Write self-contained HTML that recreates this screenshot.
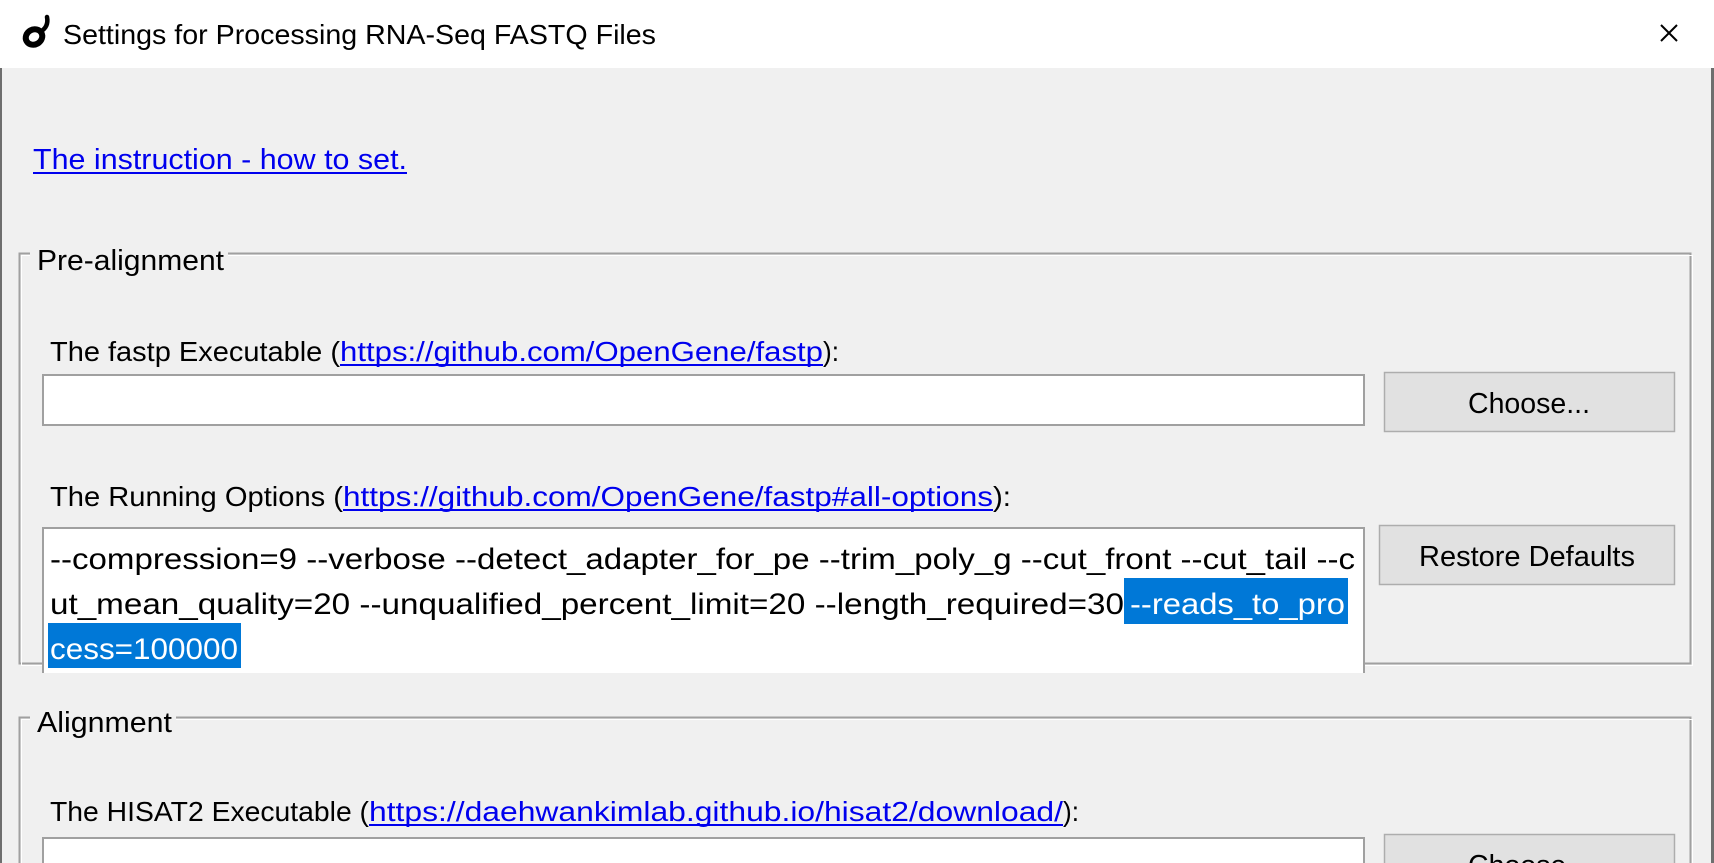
<!DOCTYPE html>
<html><head><meta charset="utf-8"><style>
html,body{margin:0;padding:0;width:1714px;height:863px;overflow:hidden;background:#f0f0f0}
svg{display:block}
text{font-family:"Liberation Sans","DejaVu Sans",sans-serif;fill:#000}
.l{fill:#0000ee}
</style></head><body>
<svg width="1714" height="863" viewBox="0 0 1714 863" xmlns="http://www.w3.org/2000/svg">
<defs><clipPath id="c"><rect x="0" y="0" width="1714" height="863"/></clipPath></defs>
<g clip-path="url(#c)">
<rect x="0" y="0" width="1714" height="863" fill="#f0f0f0"/>
<rect x="0" y="0" width="1714" height="68" fill="#ffffff"/>
<rect x="0" y="68" width="2" height="795" fill="#6e6e6e"/>
<rect x="1711" y="68" width="3" height="795" fill="#6e6e6e"/>
<!-- icon -->
<ellipse cx="34" cy="37" rx="8.5" ry="7.5" fill="none" stroke="#000" stroke-width="6" transform="rotate(-30 34 37)"/>
<path d="M40 32 Q49 27 47 17" fill="none" stroke="#000" stroke-width="4.5" stroke-linecap="round"/>
<text x="63" y="44" font-size="28" textLength="593" lengthAdjust="spacingAndGlyphs">Settings for Processing RNA-Seq FASTQ Files</text>
<path d="M1661 25 L1677 41 M1677 25 L1661 41" stroke="#000" stroke-width="2"/>
<!-- link -->
<text x="33" y="169" font-size="29" class="l" textLength="374" lengthAdjust="spacingAndGlyphs">The instruction - how to set.</text>
<rect x="33" y="172" width="374" height="2" fill="#0000ee"/>
<!-- group 1 -->
<rect x="19.5" y="253.5" width="1671" height="410" fill="none" stroke="#a0a0a0" stroke-width="2"/>
<rect x="21.5" y="255.5" width="1671" height="410" fill="none" stroke="#ffffff" stroke-width="1"/>
<rect x="30" y="240" width="198" height="30" fill="#f0f0f0"/>
<text x="37" y="270" font-size="29" textLength="187" lengthAdjust="spacingAndGlyphs">Pre-alignment</text>
<text x="50" y="361" font-size="28" textLength="290" lengthAdjust="spacingAndGlyphs">The fastp Executable (</text>
<text x="340" y="361" font-size="28" class="l" textLength="483" lengthAdjust="spacingAndGlyphs">https://github.com/OpenGene/fastp</text>
<rect x="340" y="364" width="483" height="2" fill="#0000ee"/>
<text x="823" y="361" font-size="28" textLength="16" lengthAdjust="spacingAndGlyphs">):</text>
<rect x="43" y="375" width="1321" height="50" fill="#fff" stroke="#a0a0a0" stroke-width="2"/>
<rect x="1384.5" y="372.5" width="290" height="59" fill="#e1e1e1" stroke="#adadad" stroke-width="1.5"/>
<text x="1529" y="413" font-size="29" text-anchor="middle" textLength="122" lengthAdjust="spacingAndGlyphs">Choose...</text>
<text x="50" y="506" font-size="28" textLength="293" lengthAdjust="spacingAndGlyphs">The Running Options (</text>
<text x="343" y="506" font-size="28" class="l" textLength="650" lengthAdjust="spacingAndGlyphs">https://github.com/OpenGene/fastp#all-options</text>
<rect x="343" y="509" width="650" height="2" fill="#0000ee"/>
<text x="993" y="506" font-size="28" textLength="18" lengthAdjust="spacingAndGlyphs">):</text>
<!-- textarea -->
<rect x="42" y="527" width="1323" height="146" fill="#fff"/>
<path d="M43 673 V528 H1364 V673" fill="none" stroke="#a0a0a0" stroke-width="2"/>
<text x="50" y="569" font-size="30" textLength="1305" lengthAdjust="spacingAndGlyphs">--compression=9 --verbose --detect_adapter_for_pe --trim_poly_g --cut_front --cut_tail --c</text>
<rect x="1124" y="578" width="224" height="46" fill="#0078d7"/>
<text x="50" y="614" font-size="30" textLength="1074" lengthAdjust="spacingAndGlyphs">ut_mean_quality=20 --unqualified_percent_limit=20 --length_required=30</text>
<text x="1130" y="614" font-size="30" style="fill:#fff" textLength="215" lengthAdjust="spacingAndGlyphs">--reads_to_pro</text>
<rect x="48" y="623" width="193" height="45" fill="#0078d7"/>
<text x="50" y="659" font-size="30" style="fill:#fff" textLength="188" lengthAdjust="spacingAndGlyphs">cess=100000</text>
<rect x="1379.5" y="525.5" width="295" height="59" fill="#e1e1e1" stroke="#adadad" stroke-width="1.5"/>
<text x="1527" y="566" font-size="29" text-anchor="middle" textLength="216" lengthAdjust="spacingAndGlyphs">Restore Defaults</text>
<!-- group 2 -->
<rect x="19.5" y="717.5" width="1671" height="200" fill="none" stroke="#a0a0a0" stroke-width="2"/>
<rect x="21.5" y="719.5" width="1671" height="200" fill="none" stroke="#ffffff" stroke-width="1"/>
<rect x="30" y="704" width="146" height="30" fill="#f0f0f0"/>
<text x="37" y="732" font-size="29" textLength="135" lengthAdjust="spacingAndGlyphs">Alignment</text>
<text x="50" y="821" font-size="28" textLength="319" lengthAdjust="spacingAndGlyphs">The HISAT2 Executable (</text>
<text x="369" y="821" font-size="28" class="l" textLength="694" lengthAdjust="spacingAndGlyphs">https://daehwankimlab.github.io/hisat2/download/</text>
<rect x="369" y="824" width="694" height="2" fill="#0000ee"/>
<text x="1063" y="821" font-size="28" textLength="16" lengthAdjust="spacingAndGlyphs">):</text>
<rect x="43" y="838" width="1321" height="50" fill="#fff" stroke="#a0a0a0" stroke-width="2"/>
<rect x="1384.5" y="834.5" width="290" height="59" fill="#e1e1e1" stroke="#adadad" stroke-width="1.5"/>
<text x="1529" y="875" font-size="29" text-anchor="middle" textLength="122" lengthAdjust="spacingAndGlyphs">Choose...</text>
</g>
</svg>
</body></html>
